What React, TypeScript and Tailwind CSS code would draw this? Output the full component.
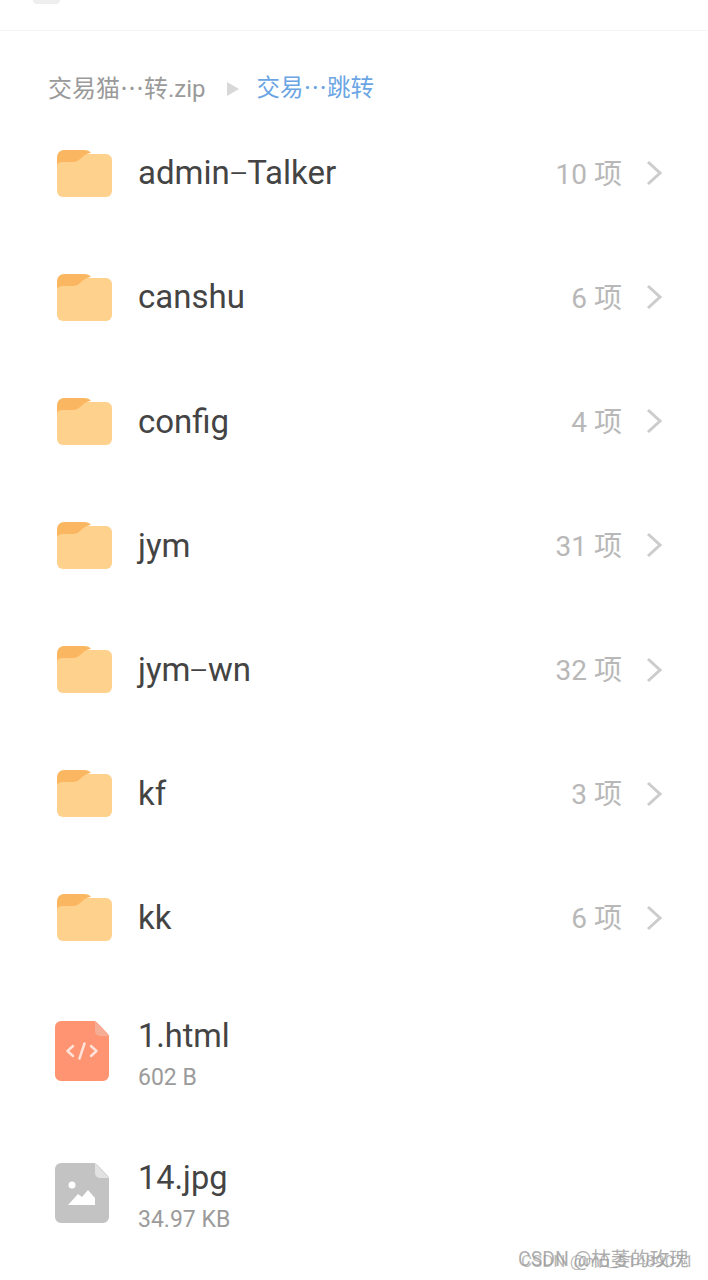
const folders = [
  { name: 'admin-Talker', count: '10 项' },
  { name: 'canshu', count: '6 项' },
  { name: 'config', count: '4 项' },
  { name: 'jym', count: '31 项' },
  { name: 'jym-wn', count: '32 项' },
  { name: 'kf', count: '3 项' },
  { name: 'kk', count: '6 项' },
];

function FolderIcon() {
  return (
    <svg width="55" height="47" viewBox="0 0 55 47" className="shrink-0">
      <path d="M0 10a6 6 0 0 1 6-6h43a6 6 0 0 1 6 6v31a6 6 0 0 1-6 6H6a6 6 0 0 1-6-6z" fill="#fed18c" />
      <path d="M0 15V7a7 7 0 0 1 7-7h20c3 0 6 1 7 3c-4 0-7 2-11 6c-2 2-4 3-7 3H6c-3 0-5 1-6 3z" fill="#fbb661" />
    </svg>
  );
}

function CodeFileIcon() {
  return (
    <svg width="54" height="60" viewBox="0 0 54 60" className="shrink-0">
      <path d="M6 0h33c1 0 2 .5 3 1.500l10.500 11c1 1 1.500 2 1.500 3V54a6 6 0 0 1-6 6H6a6 6 0 0 1-6-6V6a6 6 0 0 1 6-6z" fill="#fe9472" />
      <path d="M40 0l14 15H45a5 5 0 0 1-5-5z" fill="#f5ad95" />
      <path d="M18 25l-5.500 5 5.500 5M36 25l5.500 5-5.500 5M29.500 22.500l-5 15" fill="none" stroke="#ffe3d8" strokeWidth="2.500" strokeLinecap="round" strokeLinejoin="round" />
    </svg>
  );
}

function ImageFileIcon() {
  return (
    <svg width="54" height="60" viewBox="0 0 54 60" className="shrink-0">
      <path d="M6 0h33c1 0 2 .5 3 1.500l10.500 11c1 1 1.500 2 1.500 3V54a6 6 0 0 1-6 6H6a6 6 0 0 1-6-6V6a6 6 0 0 1 6-6z" fill="#c3c3c3" />
      <path d="M40 0l14 15H45a5 5 0 0 1-5-5z" fill="#e2e2e2" />
      <circle cx="17" cy="22" r="3.500" fill="#fff" />
      <path d="M13 42l10-11 4 3 6-7 7 8v7z" fill="#fff" />
    </svg>
  );
}

function Chevron() {
  return (
    <svg width="18" height="26" viewBox="0 0 18 26" className="ml-[23px] shrink-0">
      <path d="M3 2l12 11L3 24" fill="none" stroke="#cccccc" strokeWidth="3" />
    </svg>
  );
}

export default function App() {
  return (
    <div
      className="relative h-[1280px] w-[708px] overflow-hidden bg-white"
      style={{ fontFamily: 'Roboto, "Noto Sans CJK SC", sans-serif' }}
    >
      {/* Top bar, cut off by the crop */}
      <div className="h-[31px] border-b border-[#f5f5f5] pl-[33px]">
        <div className="h-[4px] w-[27px] rounded-b-full bg-[#eeeeee]" />
      </div>

      {/* Breadcrumb */}
      <div className="flex h-[80px] items-center pl-[48px] pt-[35px] text-[24px]">
        <span className="text-[#9a9a9a]">交易猫⋯转.zip</span>
        <svg width="12" height="14" viewBox="0 0 12 14" className="ml-[21px] mr-[18px]">
          <path d="M0 0l12 7-12 7z" fill="#d8d8d8" />
        </svg>
        <span className="text-[23.5px] text-[#6ba5e4]">交易⋯跳转</span>
      </div>

      {/* Folders */}
      <div>
        {folders.map((f) => (
          <div key={f.name} className="flex h-[124.15px] items-center pl-[57px] pr-[45px]">
            <FolderIcon />
            <div className="ml-[26px] flex-1 text-[33px] text-[#444444]">
              {f.name.split('-').map((part, i) => (
                <span key={part}>
                  {i > 0 && <span className="mx-[4px] inline-block scale-x-[1.9] font-light">-</span>}
                  {part}
                </span>
              ))}
            </div>
            <div className="pt-[3px] text-[28px] text-[#b8b8b8]">{f.count}</div>
            <Chevron />
          </div>
        ))}
      </div>

      {/* Files */}
      <div className="flex h-[142px] items-center pl-[55px]">
        <CodeFileIcon />
        <div className="ml-[29px] pt-[6px]">
          <div className="text-[32.500px] leading-[40px] text-[#444444]">1.html</div>
          <div className="mt-[8px] text-[23px] leading-[28px] text-[#9b9b9b]">602 B</div>
        </div>
      </div>
      <div className="flex h-[142px] items-center pl-[55px]">
        <ImageFileIcon />
        <div className="ml-[29px] pt-[6px]">
          <div className="text-[32.500px] leading-[40px] text-[#444444]">14.jpg</div>
          <div className="mt-[8px] text-[23px] leading-[28px] text-[#9b9b9b]">34.97 KB</div>
        </div>
      </div>

      {/* Doubled CSDN watermark */}
      <div className="absolute left-[518px] top-[1248px] whitespace-nowrap text-[19.5px] leading-[24px] text-[#8a8a8a]/70">
        CSDN @枯萎的玫瑰
      </div>
      <div className="absolute left-[521px] top-[1249px] whitespace-nowrap text-[17px] leading-[24px] text-[#9a9a9a]/70">
        CSDN @m0_51489071
      </div>
    </div>
  );
}
